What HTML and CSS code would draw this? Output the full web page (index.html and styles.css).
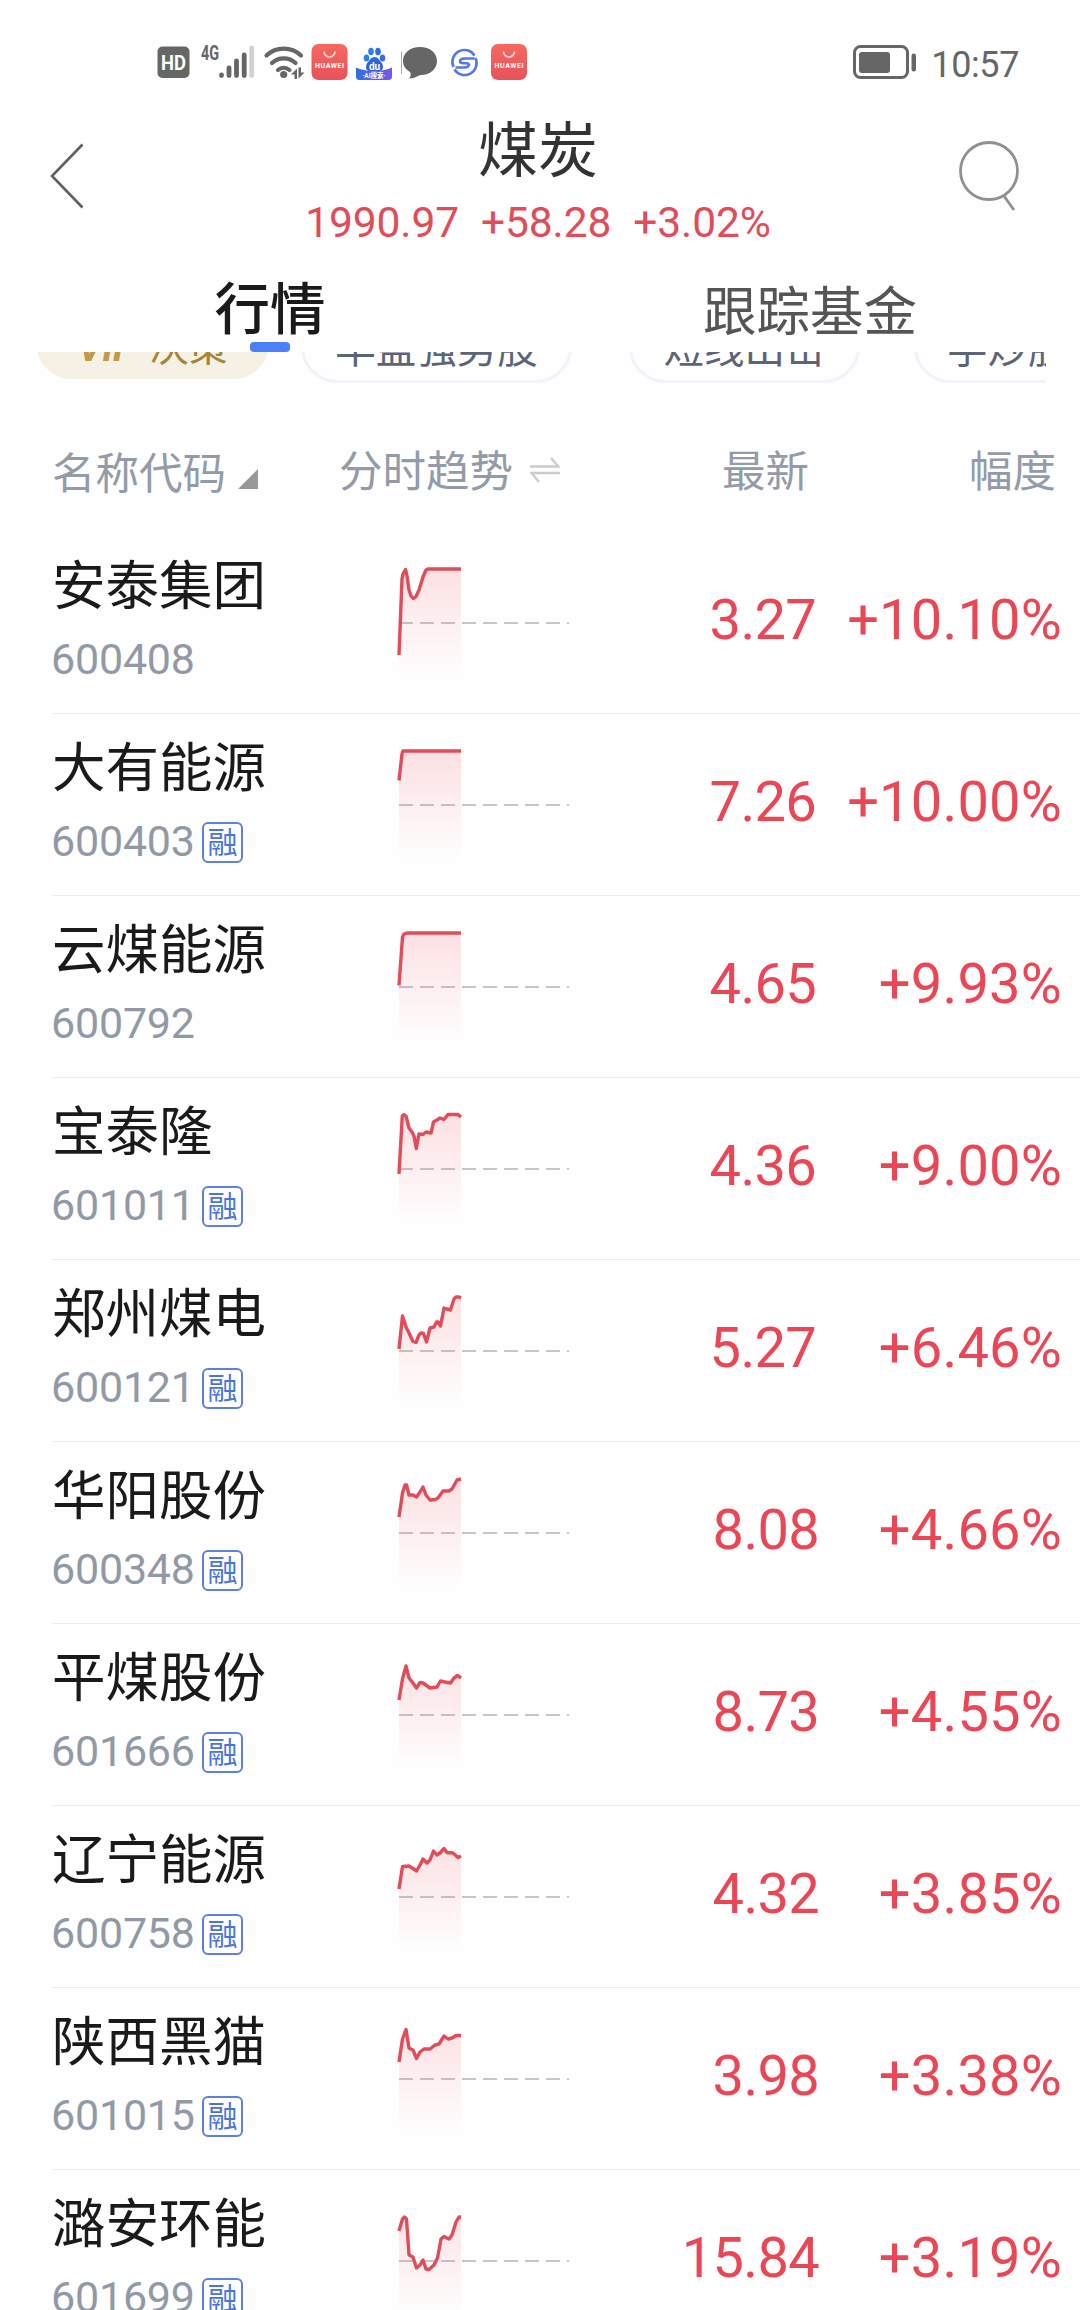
FILE: index.html
```html
<!DOCTYPE html>
<html lang="zh-CN">
<head>
	<meta charset="UTF-8">
	<meta name="viewport" content="width=device-width, initial-scale=1.0">
	<title>煤炭 - 行情</title>
	<link rel="stylesheet" href="styles.css">
</head>
<body>

	<!-- STATUS BAR -->
	<div class="status-bar">
		<svg class="status-icons" width="380" height="44" viewBox="150 40 380 44">
			<defs>
				<linearGradient id="red" x1="0" y1="0" x2="0" y2="1">
					<stop offset="0" stop-color="#f4695f"/>
					<stop offset="1" stop-color="#e8525b"/>
				</linearGradient>
				<linearGradient id="baidu" x1="0" y1="0" x2="1" y2="0">
					<stop offset="0" stop-color="#2f6fe0"/>
					<stop offset="1" stop-color="#7a55f0"/>
				</linearGradient>
				<g id="huawei">
					<rect width="36" height="36" rx="7" fill="url(#red)"/>
					<path d="M12.500 7.500a5.500 5.500 0 0 0 11 0" fill="none" stroke="#ffd9d3" stroke-width="1.600"/>
					<text x="18" y="23.500" class="huawei-text" textLength="29">HUAWEI</text>
				</g>
			</defs>
			<!-- HD -->
			<rect x="157.500" y="46.500" width="32" height="31.500" rx="5" fill="#666"/>
			<text x="173.500" y="70" class="hd-text" textLength="25" lengthAdjust="spacingAndGlyphs">HD</text>
			<!-- signal -->
			<text x="201" y="60" class="net-text" textLength="18" lengthAdjust="spacingAndGlyphs">4G</text>
			<g stroke-width="4.800" stroke-linecap="round" stroke="#666">
				<path d="M221.500 75v.5M229 68v7.500M236.500 61v14.500M244.200 55v20.500"/>
				<path d="M251.700 48v27.500" stroke="#d2d2d2"/>
			</g>
			<!-- wifi -->
			<g fill="none" stroke="#666" stroke-width="4.200" stroke-linecap="round">
				<path d="M266.500 55.500a25 25 0 0 1 34.500 0M272 63a17 17 0 0 1 23.500 0M278 70a9 9 0 0 1 11.500 0"/>
			</g>
			<circle cx="283.700" cy="74.500" r="3.600" fill="#666"/>
			<path d="M291 74.500l6-6v10.500h-2.500v-4.500zM304.500 72.500l-6 6v-11h2.500v5z" fill="#666"/>
			<use href="#huawei" x="311.500" y="44"/>
			<!-- baidu -->
			<path d="M374.500 57c3.500 0 4.500 3 6.500 5s3.500 8-1 9h-11c-4.500-1-3-7-1-9s3-5 6.500-5z" fill="#2f62dc"/>
			<ellipse cx="366.500" cy="58" rx="2.800" ry="3.600" fill="#2f80e8"/>
			<ellipse cx="371" cy="51.500" rx="2.800" ry="3.800" fill="#2f80e8"/>
			<ellipse cx="378" cy="51.500" rx="2.800" ry="3.800" fill="#3468e0"/>
			<ellipse cx="382.500" cy="58" rx="2.800" ry="3.600" fill="#3f6be0"/>
			<path d="M356 67.500q18 7.500 36 0v9q0 3.500-3.500 3.500h-29q-3.500 0-3.500-3.500z" fill="url(#baidu)"/>
			<text x="374.500" y="69.500" class="baidu-text">du</text>
			<text x="374" y="78" class="ai-text">·AI搜索·</text>
			<!-- message -->
			<path d="M401.500 51.500V74" stroke="#aaa" stroke-width="1"/>
			<path d="M420 47c10 0 17 6 17 14s-7 14-16 14c-2 0-6 3.500-12 3.500 2-2 2-4.500 1-6.500-5-3-7-7-7-11 0-8 7-14 17-14z" fill="#666"/>
			<!-- S browser -->
			<g fill="none" stroke="#5577e4" stroke-width="2.600">
				<path d="M453.500 67a12 12 0 0 1 21-11.500"/>
				<path d="M475.500 58a12 12 0 0 1-21 11.500"/>
				<path d="M474.500 58.500h-9.500q-5 0-5 2.800 0 2 3.500 2h3q3 .200 2.500 2-1 2.200-4.500 2.200h-9"/>
			</g>
			<use href="#huawei" x="491" y="44"/>
		</svg>
		<div class="status-right">
			<svg width="64" height="34" viewBox="0 0 64 34">
				<rect x="1.500" y="1.500" width="53" height="31" rx="6" fill="none" stroke="#666" stroke-width="3"/>
				<rect x="6" y="7" width="31" height="21" rx="3" fill="#666"/>
				<rect x="58.500" y="8.500" width="4.500" height="18" rx="2.200" fill="#666"/>
			</svg>
			<span class="clock">10:57</span>
		</div>
	</div>

	<!-- TITLE -->
	<header class="header">
		<svg class="back" width="34" height="66" viewBox="0 0 34 66">
			<path d="M32.500 1.500L2 33l30.500 31.500" fill="none" stroke="#606060" stroke-width="2.600"/>
		</svg>
		<div class="title">
			<h1>煤炭</h1>
			<p class="index"><span>1990.97</span><span>+58.28</span><span>+3.02%</span></p>
		</div>
		<svg class="search" width="62" height="72" viewBox="0 0 62 72">
			<circle cx="30" cy="30" r="28.500" fill="none" stroke="#909090" stroke-width="2.800"/>
			<path d="M45 55l10 14" stroke="#909090" stroke-width="2.800"/>
		</svg>
	</header>

	<!-- TABS -->
	<nav class="tabs">
		<a class="tab active">行情</a>
		<a class="tab">跟踪基金</a>
	</nav>

	<!-- STRATEGY PILLS, scrolled under the tabs -->
	<div class="pills">
		<span class="pill vip"><i>VIP</i>决策</span>
		<span class="pill wide">早盘强势股</span>
		<span class="pill mid">短线出击</span>
		<span class="pill last">学炒股</span>
	</div>

	<!-- TABLE HEAD -->
	<div class="row head">
		<div class="col-name">名称代码
			<svg width="20" height="20" viewBox="0 0 20 20"><path d="M20 0v20H0z" fill="#999"/></svg>
		</div>
		<div class="col-trend">分时趋势
			<svg width="30" height="28" viewBox="0 0 30 28"><path d="M0 10.500h28.500L21 2M30 17H1.500L9 26" fill="none" stroke="#ccc" stroke-width="2.400"/></svg>
		</div>
		<div class="col-price">最新</div>
		<div class="col-change">幅度</div>
	</div>

	<!-- STOCK LIST -->
	<div class="list" id="list"></div>

	<!-- shared fill for the trend charts -->
	<svg class="defs" width="0" height="0">
		<defs>
			<linearGradient id="fade" gradientUnits="userSpaceOnUse" x1="0" y1="-54" x2="0" y2="54">
				<stop offset="0" stop-color="#f04452" stop-opacity="0.160"/>
				<stop offset="1" stop-color="#f04452" stop-opacity="0"/>
			</linearGradient>
		</defs>
	</svg>

	<script>
		// trend: x,y pairs, y = 0 is the previous close
		const stocks = [
			{ name: "安泰集团", code: "600408", margin: false, price: "3.27", change: "+10.10%",
				trend: "0,32 3,-44 4,-49 6.5,-53.5 8,-47 10,-33 12,-27 14.500,-24.500 17,-26.500 20,-33 24,-46 27,-53 29,-54 62,-54" },
			{ name: "大有能源", code: "600403", margin: true, price: "7.26", change: "+10.00%",
				trend: "0,-24.5 3,-51 4,-54 62,-54" },
			{ name: "云煤能源", code: "600792", margin: false, price: "4.65", change: "+9.93%",
				trend: "0,-1.5 3.5,-50 5,-53 8,-54 62,-54" },
			{ name: "宝泰隆", code: "601011", margin: true, price: "4.36", change: "+9.00%",
				trend: "0,5 3.3,-53 5,-54.5 7,-53 10,-41 13,-37 15,-33 17.3,-20.5 20,-35 24,-34.5 27,-37 32,-36 34.5,-47 38,-49 41,-51 45,-49.5 49,-54.5 59,-54.5 62,-52" },
			{ name: "郑州煤电", code: "600121", margin: true, price: "5.27", change: "+6.46%",
				trend: "0,-2 3.5,-35 7,-24 10,-18 14,-9.5 17,-8.5 20,-16 22,-18 24.5,-17.5 27.5,-9 31,-23 35,-24 37.5,-29 39,-29 41.5,-25 45,-43 48,-42 51.5,-41 55,-52 57,-54 60,-54 62,-53" },
			{ name: "华阳股份", code: "600348", margin: true, price: "8.08", change: "+4.66%",
				trend: "0,-16 3.5,-40 6,-48 7.5,-48 10,-38 14,-38 17.5,-36 21,-41 24,-46 27,-38 31,-33 36,-33.5 39,-35 44,-42 50,-42 53,-44 58,-53 62,-54" },
			{ name: "平煤股份", code: "601666", margin: true, price: "8.73", change: "+4.55%",
				trend: "0,-15 3.5,-36 7,-49 10,-37 14,-32 17.5,-27 21,-32.5 24,-32 31,-27 38,-28 41.5,-34 46,-33 51.5,-32 55,-37 58.5,-39.5 62,-37" },
			{ name: "辽宁能源", code: "600758", margin: true, price: "4.32", change: "+3.85%",
				trend: "0,-8 3.5,-30.5 10,-31 14,-28.5 17.5,-26 21,-32 24,-38 28,-34 31,-37 34.5,-46 38,-42 41,-44 45,-48.5 48,-44.5 54,-44 59,-39.5 62,-41" },
			{ name: "陕西黑猫", code: "601015", margin: true, price: "3.98", change: "+3.38%",
				trend: "0,-17 3.5,-40 7,-49.5 10,-31 14,-29 17.5,-20.5 21,-27 25,-30 31,-30 36,-34 40,-35 45,-43 49,-40 53,-41 57,-43.5 62,-43.5" },
			{ name: "潞安环能", code: "601699", margin: true, price: "15.84", change: "+3.19%",
				trend: "0,-30 3.5,-42 5.5,-44 7.5,-42 10,-6 14,-4 17.5,7 21,4 24,-1 27,8 30,8.5 35,4 38.5,-3 42,-22 45,-24.5 50,-22 53,-26 57,-39 60,-44 62,-44" }
		];

		document.getElementById("list").innerHTML = stocks.map(s => `
			<div class="row stock">
				<div class="col-name">
					<div class="name">${s.name}</div>
					<div class="code">${s.code}${s.margin ? '<span class="badge">融</span>' : ''}</div>
				</div>
				<div class="col-trend">
					<svg width="174" height="120" viewBox="-2 -60 174 120">
						<path class="base" d="M0 0H170"/>
						<polygon points="0,54 ${s.trend} 62,54" fill="url(#fade)"/>
						<polyline class="line" points="${s.trend}"/>
					</svg>
				</div>
				<div class="col-price">${s.price}</div>
				<div class="col-change">${s.change}</div>
			</div>`).join("");
	</script>

</body>
</html>
```
FILE: styles.css
```css
* {
	margin: 0;
	padding: 0;
	box-sizing: border-box;
}

body {
	width: 1080px;
	height: 2310px;
	overflow: hidden;
	background: #fefefe;
	color: #1a1a1a;
	font-family: Roboto, "Noto Sans CJK SC", sans-serif;
}

svg {
	display: block;
	flex: none;
}

/* STATUS BAR */
.status-bar {
	display: flex;
	justify-content: space-between;
	align-items: flex-start;
	height: 90px;
	padding: 40px 61px 0 150px;
}

.status-right {
	display: flex;
	align-items: center;
	gap: 14px;
	padding-top: 5px;
	height: 39px;
}

.clock {
	font-size: 36px;
	line-height: 40px;
	padding-top: 5px;
	letter-spacing: -0.4px;
	color: #666;
}

.hd-text,
.huawei-text,
.baidu-text,
.ai-text {
	fill: #fff;
	text-anchor: middle;
	font-weight: bold;
}

.hd-text {
	font-size: 21px;
}

.huawei-text {
	font-size: 7px;
}

.baidu-text {
	font-size: 10px;
}

.ai-text {
	font-size: 6.500px;
}

.net-text {
	fill: #666;
	font-size: 20px;
	font-weight: bold;
}

/* TITLE */
.header {
	display: flex;
	justify-content: space-between;
	align-items: flex-start;
	height: 174px;
	padding: 0 59px 0 50px;
}

.back {
	margin-top: 53px;
}

.search {
	margin-top: 51px;
}

.title {
	text-align: center;
	padding-left: 33px;
}

.title h1 {
	font-size: 60px;
	font-weight: 400;
	line-height: 80px;
	padding-top: 22px;
	height: 99px;
	color: #333;
}

.index {
	display: flex;
	gap: 22px;
	font-size: 42.500px;
	line-height: 50px;
	padding-top: 9px;
	letter-spacing: -0.1px;
	color: #e04c58;
}

/* TABS */
.tabs {
	display: flex;
	height: 88px;
}

.tab {
	position: relative;
	width: 540px;
	text-align: center;
	font-size: 53.500px;
	line-height: 97px;
	color: #555;
}

.tab.active {
	font-size: 55.500px;
	font-weight: 500;
	line-height: 94px;
	color: #1a1a1a;
}

.tab.active::after {
	content: "";
	position: absolute;
	left: 250px;
	bottom: 0;
	width: 40px;
	height: 10px;
	border-radius: 4px;
	background: #4d7ff8;
}

/* PILLS */
.pills {
	display: flex;
	align-items: flex-end;
	height: 31px;
	margin: 0 34px 0 36px;
	overflow: hidden;
}

.pill {
	flex: none;
	height: 72px;
	border: 3px solid #f0f4fa;
	border-radius: 36px;
	text-align: center;
	font-size: 40.500px;
	line-height: 71px;
	color: #5c6478;
}

.pill.wide {
	width: 271px;
	margin-right: 57px;
}

.pill.mid {
	width: 231px;
	margin-right: 54px;
}

.pill.last {
	width: 190px;
	padding-left: 30px;
	text-align: left;
}

.pill.vip {
	width: 233px;
	margin: 0 32px 4px 0;
	border-color: #f6f1e5;
	background: #f6f1e5;
	font-size: 38.500px;
	line-height: 75px;
	color: #a88437;
}

.pill.vip i {
	margin-right: 13px;
	font-weight: 700;
	color: #c09a48;
}

/* TABLE */
.row {
	display: grid;
	grid-template-columns: 288px 273px 230px 1fr;
	margin-left: 52px;
	padding-right: 18px;
}

.head {
	height: 149px;
	padding-top: 60px;
	font-size: 43.500px;
	line-height: 60px;
	color: #949ba8;
}

.head .col-name,
.head .col-trend {
	display: flex;
	gap: 12px;
}

.head .col-name {
	padding-top: 2px;
}

.head .col-name svg {
	margin-top: 24px;
}

.head .col-trend {
	gap: 17px;
	margin-left: -1px;
}

.head .col-trend svg {
	margin-top: 13px;
}

.head .col-price,
.head .col-change {
	text-align: right;
}

.head .col-price {
	padding-right: 34px;
}

.head .col-change {
	padding-right: 6px;
}

.stock {
	height: 182px;
	border-bottom: 1px solid #ececec;
}

.name {
	padding-top: 15px;
	height: 96px;
	font-size: 53.500px;
	line-height: 80px;
}

.code {
	display: flex;
	align-items: center;
	gap: 7px;
	height: 62px;
	margin-left: -1px;
	font-size: 43px;
	letter-spacing: -0.2px;
	color: #9299a6;
}

.badge {
	width: 41px;
	height: 41px;
	margin-top: 3px;
	border: 2px solid #5b80dd;
	border-radius: 6px;
	text-align: center;
	font-size: 30px;
	line-height: 38px;
	color: #4a74dc;
}

.stock .col-trend {
	padding: 31px 0 0 57px;
}

.base {
	fill: none;
	stroke: #c5c6cc;
	stroke-width: 2;
	stroke-dasharray: 14 7;
}

.line {
	fill: none;
	stroke: #e04c5a;
	stroke-width: 3.400;
	stroke-linejoin: round;
}

.stock .col-price,
.stock .col-change {
	padding-top: 48px;
	font-size: 56px;
	line-height: 80px;
	text-align: right;
	color: #ea4756;
}

.stock .col-change {
	letter-spacing: 0.2px;
}

.stock .col-price {
	padding-right: 27px;
	letter-spacing: -0.7px;
}

/* the lower rows sit a little further right */
.stock:nth-child(n+6) .col-price {
	padding-right: 24px;
}
```
